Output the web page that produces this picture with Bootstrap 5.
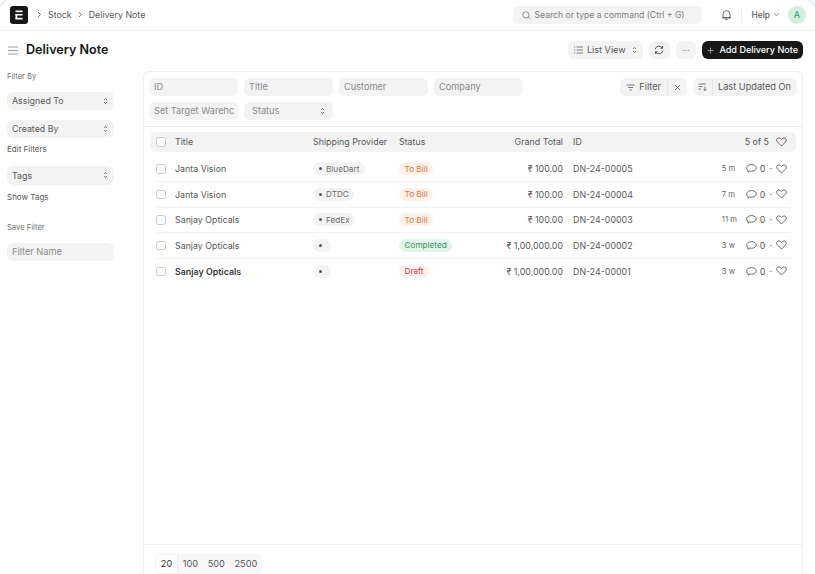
<!DOCTYPE html>
<html lang="en"><head><meta charset="utf-8"><title>Delivery Note</title>
<link href="https://cdn.jsdelivr.net/npm/bootstrap@5.3.0/dist/css/bootstrap.min.css" rel="stylesheet">
<style>
html,body{height:100%;overflow:hidden}
body{font-family:Inter,"Liberation Sans",sans-serif;font-size:8.85px;color:#585858;background:#fff}
svg{display:block;flex:none}
.corner{position:absolute;top:0}
.corner-l{left:0}
.corner-r{right:0}
.topbar{height:31px;border-bottom:1px solid #f0f0f0;padding:0 9px 0 10px}
.logo{width:18px;height:18px;background:#171717;border-radius:3px;color:#fff}
.crumbs{font-size:8.85px;margin-left:9px;gap:6px}
.cmd{width:189px;height:18px;background:#f3f3f3;border-radius:6px;color:#7c7c7c;padding:0 9px;gap:4px;font-size:8.6px;margin-right:19px;white-space:nowrap}
.sep{width:1px;height:16px;background:#ededed;margin:0 9.5px}
.helpbtn{font-weight:500;font-size:8.4px;gap:3px}
.avatar{width:18px;height:18px;border-radius:50%;background:#d5efdf;color:#30a66d;font-size:9px;font-weight:500;margin-left:8px}
.pagehead{height:40px;padding:0 12px 2px 8px}
.pagehead h1{font-size:12.6px;font-weight:600;color:#171717;margin:0 0 0 8px;line-height:1}
.headacts{gap:6px}
.gbtn{height:18px;background:#f3f3f3;border-radius:6px;color:#585858;font-size:9.1px;padding:0 6px;gap:4px}
.gbtn-list{width:75px}
.gbtn-refresh{width:21px;padding:0}
.gbtn-more{width:20px;padding:0;font-size:8px;letter-spacing:.3px}
.blackbtn{height:18px;background:#171717;border-radius:6px;color:#fff;font-size:9.05px;font-weight:500;padding:0 5px 0 5.5px;gap:5px}
.mainarea{flex:1;min-height:0}
.sidebar{width:143px;flex:none;padding:0 29px 0 7px}
.side-label{font-size:7.6px;color:#6f6f6f;height:11px;line-height:11px}
.side-sel{height:18.5px;background:#f3f3f3;border-radius:6px;padding:0 6px 0 5px;font-size:8.85px}
.side-link{font-size:8px;line-height:11px}
.mb-a{margin-bottom:9.5px}.mb-b{margin-bottom:9.5px}.mb-c{margin-bottom:6px}.mb-d{margin-bottom:11px}.mb-e{margin-bottom:7px}.mb-f{margin-bottom:19px}.mb-g{margin-bottom:10.5px}
.listcard{width:660px;flex:none;border:1px solid #f0f0f0;border-bottom:0;border-radius:6px 6px 0 0}
.filterarea{height:55px;border-bottom:1px solid #eee;padding:6px 5px 0 5px}
.fgrid{display:grid;grid-template-columns:repeat(4,89px);gap:6px;grid-auto-rows:18px}
.fbox{background:#f3f3f3;border-radius:6px;color:#8a8a8a;font-size:9.2px;padding:0 5px;white-space:nowrap;height:18px}
.fbox-status{padding:0 8px}
.fgroups{gap:6px}
.fgroup{height:18px;background:#f3f3f3;border-radius:6px;font-size:9.2px;color:#585858}
.fgroup>div{height:100%}
.fgroup>div+div{border-left:1px solid #e8e8e8}
.cell-a{padding:0 6px;gap:4px}
.cell-b{padding:0 6px}
.cell-c{padding:0 5px}
.cell-d{padding:0 6px 0 5px}
.listbody{flex:1;min-height:0;padding:5px 6px 0 6px}
.lrow{display:grid;grid-template-columns:19px 138px 86px 58px 116px 1fr;align-items:center}
.lhead{height:20px;background:#f3f3f3;border-radius:6px;margin-bottom:4.5px;padding:0 9px 0 6px}
.litem{height:25.5px;border-bottom:1px solid #f3f3f3;margin:0 6px;padding-right:3px}
.litem:last-child{border-bottom:0}
.chk{width:9.5px;height:9.5px;border:1px solid #c9c9c9;border-radius:2.5px;background:#fff}
.num{text-align:right;padding-right:10px}
.pillbox{justify-self:start;height:13px;border-radius:7px;padding:0 5.5px;font-size:8.2px;gap:4.5px}
.pill-empty{width:18px}
.pgrey{background:#f3f3f3;color:#6b6b6b}
.dotx{width:3px;height:3px;border-radius:50%;background:#555}
.porange{background:#fff1e7;color:#d27a3f}
.pgreen{background:#e4f5e9;color:#3f8f5f}
.pred{background:#fff0f0;color:#c0434b}
.strong-title{color:#383838}
.headcount{gap:7px}
.tail{gap:4px}
.ago{font-size:7.6px;color:#5f5f5f;width:17px;margin-right:3px}
.cmt{margin-right:-1px}
.lfoot{height:30px;border-top:1px solid #f0f0f0;padding:9px 0 0 11px}
.pager{background:#f7f7f7;border-radius:5px;height:20px;font-size:9.2px;overflow:hidden}
.pager span{padding:0 4.8px;height:100%;display:flex;align-items:center}
.pager .on{background:#fff;border:1px solid #f3f3f3;border-right:1px solid #ececec;border-radius:5px 0 0 5px;color:#333}
</style></head><body class="d-flex flex-column">

<svg class="corner corner-l" width="8" height="8" viewBox="0 0 8 8" fill="none" stroke="#d3e2fb" stroke-width="1.2"><path d="M0 6L6 0"/></svg>
<svg class="corner corner-r" width="8" height="8" viewBox="0 0 8 8" fill="none" stroke="#d3e2fb" stroke-width="1.2"><path d="M2 0L8 6"/></svg>

<header class="topbar d-flex align-items-center">
  <div class="logo d-flex align-items-center justify-content-center">
    <svg width="8" height="10" viewBox="0 0 8 10" fill="#fff"><rect x=".5" y=".5" width="7" height="1.700"/><rect x=".5" y="4" width="7" height="1.500"/><rect x=".5" y="7.800" width="7" height="1.700"/><rect x=".5" y="4" width="1.700" height="5"/></svg>
  </div>
  <div class="crumbs d-flex align-items-center">
    <svg width="5" height="7" viewBox="0 0 5 7" fill="none" stroke="#6b6b6b" stroke-width=".9"><path d="M1 1l2.500 2.500L1 6"/></svg>
    <span>Stock</span>
    <svg width="5" height="7" viewBox="0 0 5 7" fill="none" stroke="#6b6b6b" stroke-width=".9"><path d="M1 1l2.500 2.500L1 6"/></svg>
    <span>Delivery Note</span>
  </div>
  <div class="ms-auto cmd d-flex align-items-center">
    <svg width="9" height="9" viewBox="0 0 9 9" fill="none" stroke="#7c7c7c" stroke-width=".8"><circle cx="3.900" cy="3.900" r="3.100"/><path d="M6.200 6.200L8.400 8.400"/></svg>
    <span>Search or type a command (Ctrl + G)</span>
  </div>
  <svg width="11" height="12" viewBox="0 0 11 12" fill="none" stroke="#444" stroke-width=".8"><path d="M2 8.800V5.200a3.500 3.500 0 0 1 7 0v3.600zM1 8.800h9M4.400 10.600h2.200"/></svg>
  <div class="sep"></div>
  <span class="helpbtn d-flex align-items-center">Help <svg width="7" height="5" viewBox="0 0 7 5" fill="none" stroke="#777" stroke-width=".8"><path d="M1 1.200l2.500 2.500L6 1.200"/></svg></span>
  <div class="avatar d-flex align-items-center justify-content-center">A</div>
</header>

<div class="pagehead d-flex align-items-center">
  <svg width="10" height="9" viewBox="0 0 10 9" stroke="#888" stroke-width=".8"><path d="M0 1h10M0 4.500h10M0 8h10"/></svg>
  <h1>Delivery Note</h1>
  <div class="ms-auto d-flex align-items-center headacts">
    <div class="gbtn gbtn-list d-flex align-items-center">
      <svg width="9" height="8" viewBox="0 0 9 8" stroke="#585858" stroke-width=".8"><path d="M0 1h1.200M2.600 1H9M0 4h1.200M2.600 4H9M0 7h1.200M2.600 7H9"/></svg>
      <span>List View</span>
      <svg class="ms-auto" width="5" height="8" viewBox="0 0 5 8" fill="none" stroke="#585858" stroke-width=".8"><path d="M1 3l1.500-1.600L4 3M1 5l1.500 1.600L4 5"/></svg>
    </div>
    <div class="gbtn gbtn-refresh d-flex align-items-center justify-content-center">
      <svg width="10" height="10" viewBox="0 0 10 10" fill="none" stroke="#333" stroke-width=".85"><path d="M1.200 4.200A3.900 3.900 0 0 1 8.300 3M8.800 5.800A3.900 3.900 0 0 1 1.700 7M8.600 1v2.200H6.400M1.400 9V6.800h2.200"/></svg>
    </div>
    <div class="gbtn gbtn-more d-flex align-items-center justify-content-center">···</div>
    <div class="blackbtn d-flex align-items-center">
      <svg width="7" height="7" viewBox="0 0 7 7" stroke="#bbb" stroke-width=".8"><path d="M3.500 .5v6M.5 3.500h6"/></svg>
      <span>Add Delivery Note</span>
    </div>
  </div>
</div>

<div class="mainarea d-flex">
  <aside class="sidebar">
    <div class="side-label mb-a">Filter By</div>
    <div class="side-sel mb-b d-flex align-items-center justify-content-between"><span>Assigned To</span><svg width="5" height="8" viewBox="0 0 5 8" fill="none" stroke="#555" stroke-width=".8"><path d="M1 3l1.500-1.600L4 3M1 5l1.500 1.600L4 5"/></svg></div>
    <div class="side-sel mb-c d-flex align-items-center justify-content-between"><span>Created By</span><svg width="5" height="8" viewBox="0 0 5 8" fill="none" stroke="#555" stroke-width=".8"><path d="M1 3l1.500-1.600L4 3M1 5l1.500 1.600L4 5"/></svg></div>
    <div class="side-link mb-d">Edit Filters</div>
    <div class="side-sel mb-e d-flex align-items-center justify-content-between"><span>Tags</span><svg width="5" height="8" viewBox="0 0 5 8" fill="none" stroke="#555" stroke-width=".8"><path d="M1 3l1.500-1.600L4 3M1 5l1.500 1.600L4 5"/></svg></div>
    <div class="side-link mb-f">Show Tags</div>
    <div class="side-label mb-g">Save Filter</div>
    <div class="fbox d-flex align-items-center">Filter Name</div>
  </aside>

  <main class="listcard d-flex flex-column">
    <div class="filterarea d-flex justify-content-between">
      <div class="fgrid">
        <div class="fbox d-flex align-items-center">ID</div>
        <div class="fbox d-flex align-items-center">Title</div>
        <div class="fbox d-flex align-items-center">Customer</div>
        <div class="fbox d-flex align-items-center">Company</div>
        <div class="fbox d-flex align-items-center">Set Target Warehc</div>
        <div class="fbox fbox-status d-flex align-items-center justify-content-between"><span>Status</span><svg width="5" height="8" viewBox="0 0 5 8" fill="none" stroke="#555" stroke-width=".8"><path d="M1 3l1.500-1.600L4 3M1 5l1.500 1.600L4 5"/></svg></div>
      </div>
      <div class="d-flex fgroups align-items-start">
        <div class="fgroup d-flex">
          <div class="cell-a d-flex align-items-center"><svg width="9" height="7" viewBox="0 0 9 7" stroke="#585858" stroke-width=".8"><path d="M.5 1h8M2 3.500h5M3.500 6h2"/></svg><span>Filter</span></div>
          <div class="cell-b d-flex align-items-center"><svg width="7" height="7" viewBox="0 0 7 7" stroke="#585858" stroke-width=".8"><path d="M1 1l5 5M6 1L1 6"/></svg></div>
        </div>
        <div class="fgroup d-flex">
          <div class="cell-c d-flex align-items-center"><svg width="9" height="8" viewBox="0 0 9 8" fill="none" stroke="#585858" stroke-width=".8"><path d="M.5 1h7M.5 3.500h4M.5 6h2.500M7 3.500v4M5.600 6.200L7 7.600l1.400-1.400"/></svg></div>
          <div class="cell-d d-flex align-items-center">Last Updated On</div>
        </div>
      </div>
    </div>

    <div class="listbody">
      <div class="lrow lhead">
        <div class="chk"></div><div>Title</div><div>Shipping Provider</div><div>Status</div><div class="num">Grand Total</div>
        <div class="d-flex justify-content-between align-items-center"><span>ID</span><span class="headcount d-flex align-items-center">5 of 5 <svg width="11" height="10" viewBox="0 0 11 10" fill="none" stroke="#444" stroke-width=".8"><path d="M5.500 9L1.300 4.800a2.300 2.300 0 0 1 0-3.200 2.400 2.400 0 0 1 3.300 0l.9.900.9-.900a2.400 2.400 0 0 1 3.300 0 2.300 2.300 0 0 1 0 3.200z"/></svg></span></div>
      </div>

      <div class="litem lrow"><div class="chk"></div><div>Janta Vision</div><div class="pillbox pgrey d-flex align-items-center"><i class="dotx"></i>BlueDart</div><div class="pillbox porange d-flex align-items-center">To Bill</div><div class="num">₹ 100.00</div>
        <div class="d-flex justify-content-between align-items-center"><span>DN-24-00005</span><span class="tail d-flex align-items-center"><span class="ago">5 m</span><svg class="cmt" width="11" height="9" viewBox="0 0 11 9" fill="none" stroke="#444" stroke-width=".8"><path d="M5.500 .6c2.600 0 4.800 1.400 4.800 3.300S8.100 7.200 5.500 7.200c-.6 0-1.200 0-1.700-.2L2 8.300V6.400C1 5.800.7 4.900.7 3.900.7 2 2.900.6 5.500.6z"/></svg><span>0</span><span>·</span><svg width="11" height="10" viewBox="0 0 11 10" fill="none" stroke="#444" stroke-width=".8"><path d="M5.500 9L1.300 4.800a2.300 2.300 0 0 1 0-3.200 2.400 2.400 0 0 1 3.300 0l.9.900.9-.900a2.400 2.400 0 0 1 3.300 0 2.300 2.300 0 0 1 0 3.200z"/></svg></span></div></div>

      <div class="litem lrow"><div class="chk"></div><div>Janta Vision</div><div class="pillbox pgrey d-flex align-items-center"><i class="dotx"></i>DTDC</div><div class="pillbox porange d-flex align-items-center">To Bill</div><div class="num">₹ 100.00</div>
        <div class="d-flex justify-content-between align-items-center"><span>DN-24-00004</span><span class="tail d-flex align-items-center"><span class="ago">7 m</span><svg class="cmt" width="11" height="9" viewBox="0 0 11 9" fill="none" stroke="#444" stroke-width=".8"><path d="M5.500 .6c2.600 0 4.800 1.400 4.800 3.300S8.100 7.200 5.500 7.200c-.6 0-1.200 0-1.700-.2L2 8.300V6.400C1 5.800.7 4.900.7 3.900.7 2 2.900.6 5.500.6z"/></svg><span>0</span><span>·</span><svg width="11" height="10" viewBox="0 0 11 10" fill="none" stroke="#444" stroke-width=".8"><path d="M5.500 9L1.300 4.800a2.300 2.300 0 0 1 0-3.200 2.400 2.400 0 0 1 3.300 0l.9.900.9-.900a2.400 2.400 0 0 1 3.300 0 2.300 2.300 0 0 1 0 3.200z"/></svg></span></div></div>

      <div class="litem lrow"><div class="chk"></div><div>Sanjay Opticals</div><div class="pillbox pgrey d-flex align-items-center"><i class="dotx"></i>FedEx</div><div class="pillbox porange d-flex align-items-center">To Bill</div><div class="num">₹ 100.00</div>
        <div class="d-flex justify-content-between align-items-center"><span>DN-24-00003</span><span class="tail d-flex align-items-center"><span class="ago">11 m</span><svg class="cmt" width="11" height="9" viewBox="0 0 11 9" fill="none" stroke="#444" stroke-width=".8"><path d="M5.500 .6c2.600 0 4.800 1.400 4.800 3.300S8.100 7.200 5.500 7.200c-.6 0-1.200 0-1.700-.2L2 8.300V6.400C1 5.800.7 4.900.7 3.900.7 2 2.900.6 5.500.6z"/></svg><span>0</span><span>·</span><svg width="11" height="10" viewBox="0 0 11 10" fill="none" stroke="#444" stroke-width=".8"><path d="M5.500 9L1.300 4.800a2.300 2.300 0 0 1 0-3.200 2.400 2.400 0 0 1 3.300 0l.9.900.9-.900a2.400 2.400 0 0 1 3.300 0 2.300 2.300 0 0 1 0 3.200z"/></svg></span></div></div>

      <div class="litem lrow"><div class="chk"></div><div>Sanjay Opticals</div><div class="pillbox pill-empty pgrey d-flex align-items-center"><i class="dotx"></i></div><div class="pillbox pgreen d-flex align-items-center">Completed</div><div class="num">₹ 1,00,000.00</div>
        <div class="d-flex justify-content-between align-items-center"><span>DN-24-00002</span><span class="tail d-flex align-items-center"><span class="ago">3 w</span><svg class="cmt" width="11" height="9" viewBox="0 0 11 9" fill="none" stroke="#444" stroke-width=".8"><path d="M5.500 .6c2.600 0 4.800 1.400 4.800 3.300S8.100 7.200 5.500 7.200c-.6 0-1.200 0-1.700-.2L2 8.300V6.400C1 5.800.7 4.900.7 3.900.7 2 2.900.6 5.500.6z"/></svg><span>0</span><span>·</span><svg width="11" height="10" viewBox="0 0 11 10" fill="none" stroke="#444" stroke-width=".8"><path d="M5.500 9L1.300 4.800a2.300 2.300 0 0 1 0-3.200 2.400 2.400 0 0 1 3.300 0l.9.900.9-.900a2.400 2.400 0 0 1 3.300 0 2.300 2.300 0 0 1 0 3.200z"/></svg></span></div></div>

      <div class="litem lrow"><div class="chk"></div><div class="fw-semibold strong-title">Sanjay Opticals</div><div class="pillbox pill-empty pgrey d-flex align-items-center"><i class="dotx"></i></div><div class="pillbox pred d-flex align-items-center">Draft</div><div class="num">₹ 1,00,000.00</div>
        <div class="d-flex justify-content-between align-items-center"><span>DN-24-00001</span><span class="tail d-flex align-items-center"><span class="ago">3 w</span><svg class="cmt" width="11" height="9" viewBox="0 0 11 9" fill="none" stroke="#444" stroke-width=".8"><path d="M5.500 .6c2.600 0 4.800 1.400 4.800 3.300S8.100 7.200 5.500 7.200c-.6 0-1.200 0-1.700-.2L2 8.300V6.400C1 5.800.7 4.900.7 3.900.7 2 2.900.6 5.500.6z"/></svg><span>0</span><span>·</span><svg width="11" height="10" viewBox="0 0 11 10" fill="none" stroke="#444" stroke-width=".8"><path d="M5.500 9L1.300 4.800a2.300 2.300 0 0 1 0-3.200 2.400 2.400 0 0 1 3.300 0l.9.900.9-.900a2.400 2.400 0 0 1 3.300 0 2.300 2.300 0 0 1 0 3.200z"/></svg></span></div></div>
    </div>

    <div class="lfoot">
      <div class="pager d-inline-flex">
        <span class="on">20</span><span>100</span><span>500</span><span>2500</span>
      </div>
    </div>
  </main>
</div>

<script src="https://cdn.jsdelivr.net/npm/bootstrap@5.3.0/dist/js/bootstrap.bundle.min.js"></script>
</body></html>
